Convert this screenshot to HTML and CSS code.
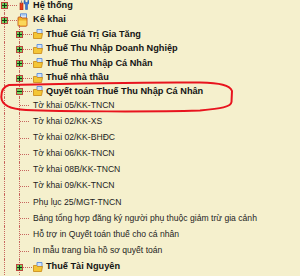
FILE: index.html
```html
<!DOCTYPE html>
<html lang="vi">
<head>
<meta charset="utf-8">
<title>Cây chức năng</title>
<link rel="stylesheet" href="styles.css">
</head>
<body>
<div class="page">
  <div class="tree">
    <div class="row top">
      <span class="g0"><i class="exp plus"></i></span>
      <span class="ico tools">
        <svg width="10" height="10" viewBox="0 0 10 10"><rect x="1" y="3" width="3" height="7" fill="#e8401c" stroke="#a8200c" stroke-width="0.6"/><rect x="2" y="0.5" width="1" height="3" fill="#8a8a8a"/><path d="M5 0.5 L5 3.5 L6.5 4.5 L6.5 9.5 L8.5 9.5 L8.5 4.5 L10 3.5 L10 0.5 L8.8 0.5 L8.8 2.5 L6.2 2.5 L6.2 0.5 Z" fill="#3a78d8" stroke="#1c4ea0" stroke-width="0.5"/></svg>
      </span>
      <span class="lbl b">Hệ thống</span>
    </div>
    <div class="row top">
      <span class="g0"><i class="exp plus"></i><i class="down"></i></span>
      <span class="ico big">
        <svg width="11" height="14" viewBox="0 0 11 14"><path d="M3.5 0.8 L9.5 0.8 L9.5 6 L3.5 6 Z" fill="#d8e8fb" stroke="#3f7ad6" stroke-width="0.8"/><path d="M4.5 2 L8.5 2" stroke="#6fa0e6" stroke-width="0.7"/><path d="M1 5 Q1 4 2 4 L4 4 L5 5 L10 5 L10 12.2 Q10 13.2 9 13.2 L2 13.2 Q1 13.2 1 12.2 Z" fill="#f0b428" stroke="#c2561a" stroke-width="0.9"/><path d="M1.6 7.5 L9.4 7.5 L9.4 12.4 L1.6 12.4 Z" fill="#fbd85a"/></svg>
      </span>
      <span class="lbl b">Kê khai</span>
    </div>
    <div class="row top">
      <span class="gl"></span>
      <span class="g1"><i class="exp plus"></i></span>
      <span class="ico fold"><svg width="10" height="10" viewBox="0 0 10 10"><path d="M4 0.5 L9 0.5 L9 5 L4 5 Z" fill="#cfe2fa" stroke="#4a82d8" stroke-width="0.8"/><path d="M0.5 3.5 L3.5 3.5 L4.5 4.5 L9.5 4.5 L8.5 9.5 L0.5 9.5 Z" fill="#f4c636" stroke="#c98712" stroke-width="0.8"/></svg></span>
      <span class="lbl b">Thuế Giá Trị Gia Tăng</span>
    </div>
    <div class="row top">
      <span class="gl"></span>
      <span class="g1"><i class="exp plus"></i></span>
      <span class="ico fold"><svg width="10" height="10" viewBox="0 0 10 10"><path d="M4 0.5 L9 0.5 L9 5 L4 5 Z" fill="#cfe2fa" stroke="#4a82d8" stroke-width="0.8"/><path d="M0.5 3.5 L3.5 3.5 L4.5 4.5 L9.5 4.5 L8.5 9.5 L0.5 9.5 Z" fill="#f4c636" stroke="#c98712" stroke-width="0.8"/></svg></span>
      <span class="lbl b">Thuế Thu Nhập Doanh Nghiệp</span>
    </div>
    <div class="row top">
      <span class="gl"></span>
      <span class="g1"><i class="exp plus"></i></span>
      <span class="ico fold"><svg width="10" height="10" viewBox="0 0 10 10"><path d="M4 0.5 L9 0.5 L9 5 L4 5 Z" fill="#cfe2fa" stroke="#4a82d8" stroke-width="0.8"/><path d="M0.5 3.5 L3.5 3.5 L4.5 4.5 L9.5 4.5 L8.5 9.5 L0.5 9.5 Z" fill="#f4c636" stroke="#c98712" stroke-width="0.8"/></svg></span>
      <span class="lbl b">Thuế Thu Nhập Cá Nhân</span>
    </div>
    <div class="row top">
      <span class="gl"></span>
      <span class="g1"><i class="exp plus"></i></span>
      <span class="ico fold"><svg width="10" height="10" viewBox="0 0 10 10"><path d="M4 0.5 L9 0.5 L9 5 L4 5 Z" fill="#cfe2fa" stroke="#4a82d8" stroke-width="0.8"/><path d="M0.5 3.5 L3.5 3.5 L4.5 4.5 L9.5 4.5 L8.5 9.5 L0.5 9.5 Z" fill="#f4c636" stroke="#c98712" stroke-width="0.8"/></svg></span>
      <span class="lbl b">Thuế nhà thầu</span>
    </div>
    <div class="row qt">
      <span class="gl"></span>
      <span class="g1"><i class="exp minus"></i></span>
      <span class="ico fold"><svg width="10" height="10" viewBox="0 0 10 10"><path d="M4 0.5 L9 0.5 L9 5 L4 5 Z" fill="#cfe2fa" stroke="#4a82d8" stroke-width="0.8"/><path d="M0.5 3.5 L3.5 3.5 L4.5 4.5 L9.5 4.5 L8.5 9.5 L0.5 9.5 Z" fill="#f4c636" stroke="#c98712" stroke-width="0.8"/></svg></span>
      <span class="lbl b">Quyết toán Thuế Thu Nhập Cá Nhân</span>
    </div>
    <div class="row leaf"><span class="gl"></span><span class="gleaf"></span><span class="lbl">Tờ khai 05/KK-TNCN</span></div>
    <div class="row leaf"><span class="gl"></span><span class="gleaf"></span><span class="lbl">Tờ khai 02/KK-XS</span></div>
    <div class="row leaf"><span class="gl"></span><span class="gleaf"></span><span class="lbl">Tờ khai 02/KK-BHĐC</span></div>
    <div class="row leaf"><span class="gl"></span><span class="gleaf"></span><span class="lbl">Tờ khai 06/KK-TNCN</span></div>
    <div class="row leaf"><span class="gl"></span><span class="gleaf"></span><span class="lbl">Tờ khai 08B/KK-TNCN</span></div>
    <div class="row leaf"><span class="gl"></span><span class="gleaf"></span><span class="lbl">Tờ khai 09/KK-TNCN</span></div>
    <div class="row leaf"><span class="gl"></span><span class="gleaf"></span><span class="lbl">Phụ lục 25/MGT-TNCN</span></div>
    <div class="row leaf"><span class="gl"></span><span class="gleaf"></span><span class="lbl">Bảng tổng hợp đăng ký người phụ thuộc giảm trừ gia cảnh</span></div>
    <div class="row leaf"><span class="gl"></span><span class="gleaf"></span><span class="lbl">Hỗ trợ in Quyết toán thuế cho cá nhân</span></div>
    <div class="row leaf"><span class="gl"></span><span class="gleaf"></span><span class="lbl">In mẫu trang bìa hồ sơ quyết toán</span></div>
    <div class="row last">
      <span class="gl"></span>
      <span class="g1"><i class="exp plus"></i></span>
      <span class="ico fold"><svg width="10" height="10" viewBox="0 0 10 10"><path d="M4 0.5 L9 0.5 L9 5 L4 5 Z" fill="#cfe2fa" stroke="#4a82d8" stroke-width="0.8"/><path d="M0.5 3.5 L3.5 3.5 L4.5 4.5 L9.5 4.5 L8.5 9.5 L0.5 9.5 Z" fill="#f4c636" stroke="#c98712" stroke-width="0.8"/></svg></span>
      <span class="lbl b">Thuế Tài Nguyên</span>
    </div>
  </div>
  <svg class="mark" width="300" height="276" viewBox="0 0 300 276"><path d="M9 85 C50 84 150 82 200 82.5 C220 83 230 85 232 91 L231.5 102 C231 107 221 108.5 200 110.5 C150 112 60 111.5 26 110 C7 109 1.5 104 1.3 97 C1.2 90 4 86.5 9 85 Z" fill="none" stroke="#e8141e" stroke-width="2"/></svg>
</div>
</body>
</html>
```

FILE: styles.css
```css
html, body {
  margin: 0;
  padding: 0;
  background: #f5f0cd;
}
.page {
  position: relative;
  width: 300px;
  height: 276px;
  overflow: hidden;
  background: #f5f0cd;
  font-family: "Liberation Sans", Arial, sans-serif;
  font-size: 8.6px;
  color: #1a1a1a;
}
.tree {
  display: flex;
  flex-direction: column;
  margin-top: -2px;
}
.row {
  display: flex;
  align-items: center;
  height: 14.5px;
  white-space: nowrap;
}
.row.qt { height: 12.2px; }
.row.leaf { height: 16.15px; }
.row.last { height: 16.6px; }
.lbl { line-height: 11px; }
.lbl.b { font-weight: bold; font-size: 9.2px; color: #141414; }
.leaf .lbl { margin-left: 3px; color: #1e1e1e; }

/* guides */
.g0, .gl, .g1, .gleaf {
  position: relative;
  align-self: stretch;
  flex: none;
}
.g0 { width: 17px; }
.gl { width: 12px; }
.g1 { width: 21px; }
.gleaf { width: 18px; }

.g0::before, .gl::before, .g1::before, .gleaf::before {
  content: "";
  position: absolute;
  top: 0;
  bottom: 0;
  border-left: 1px dotted #c8665e;
}
.g0::before, .gl::before { left: 4px; }
.g1::before, .gleaf::before { left: 7px; }

.g0::after, .g1::after, .gleaf::after {
  content: "";
  position: absolute;
  top: 50%;
  right: 0;
  border-top: 1px dotted #c8665e;
}
.g0::after { left: 5px; }
.g1::after { left: 8px; right: 1px; }
.gleaf::after { left: 8px; right: 1px; }

.down {
  position: absolute;
  left: 19px;
  top: 12px;
  bottom: 0;
  border-left: 1px dotted #c8665e;
}

.exp {
  position: absolute;
  top: 50%;
  width: 5px;
  height: 5px;
  margin-top: -3px;
  border: 1px solid #b9453c;
  background: #74d05e;
  z-index: 1;
}
.g0 .exp { left: 1px; }
.g1 .exp { left: 4px; }
.exp::before {
  content: "";
  position: absolute;
  left: 0;
  top: 2px;
  width: 5px;
  height: 1px;
  background: #0f3d0f;
}
.exp.plus::after {
  content: "";
  position: absolute;
  left: 2px;
  top: 0;
  width: 1px;
  height: 5px;
  background: #0f3d0f;
}

.ico {
  flex: none;
  display: flex;
  align-items: center;
}
.ico svg { display: block; }
.tools { margin-left: 2px; margin-right: 4px; }
.big { margin-right: 5px; }
.fold { margin-right: 3px; }

.mark {
  position: absolute;
  left: 0;
  top: 0;
  pointer-events: none;
}
```
